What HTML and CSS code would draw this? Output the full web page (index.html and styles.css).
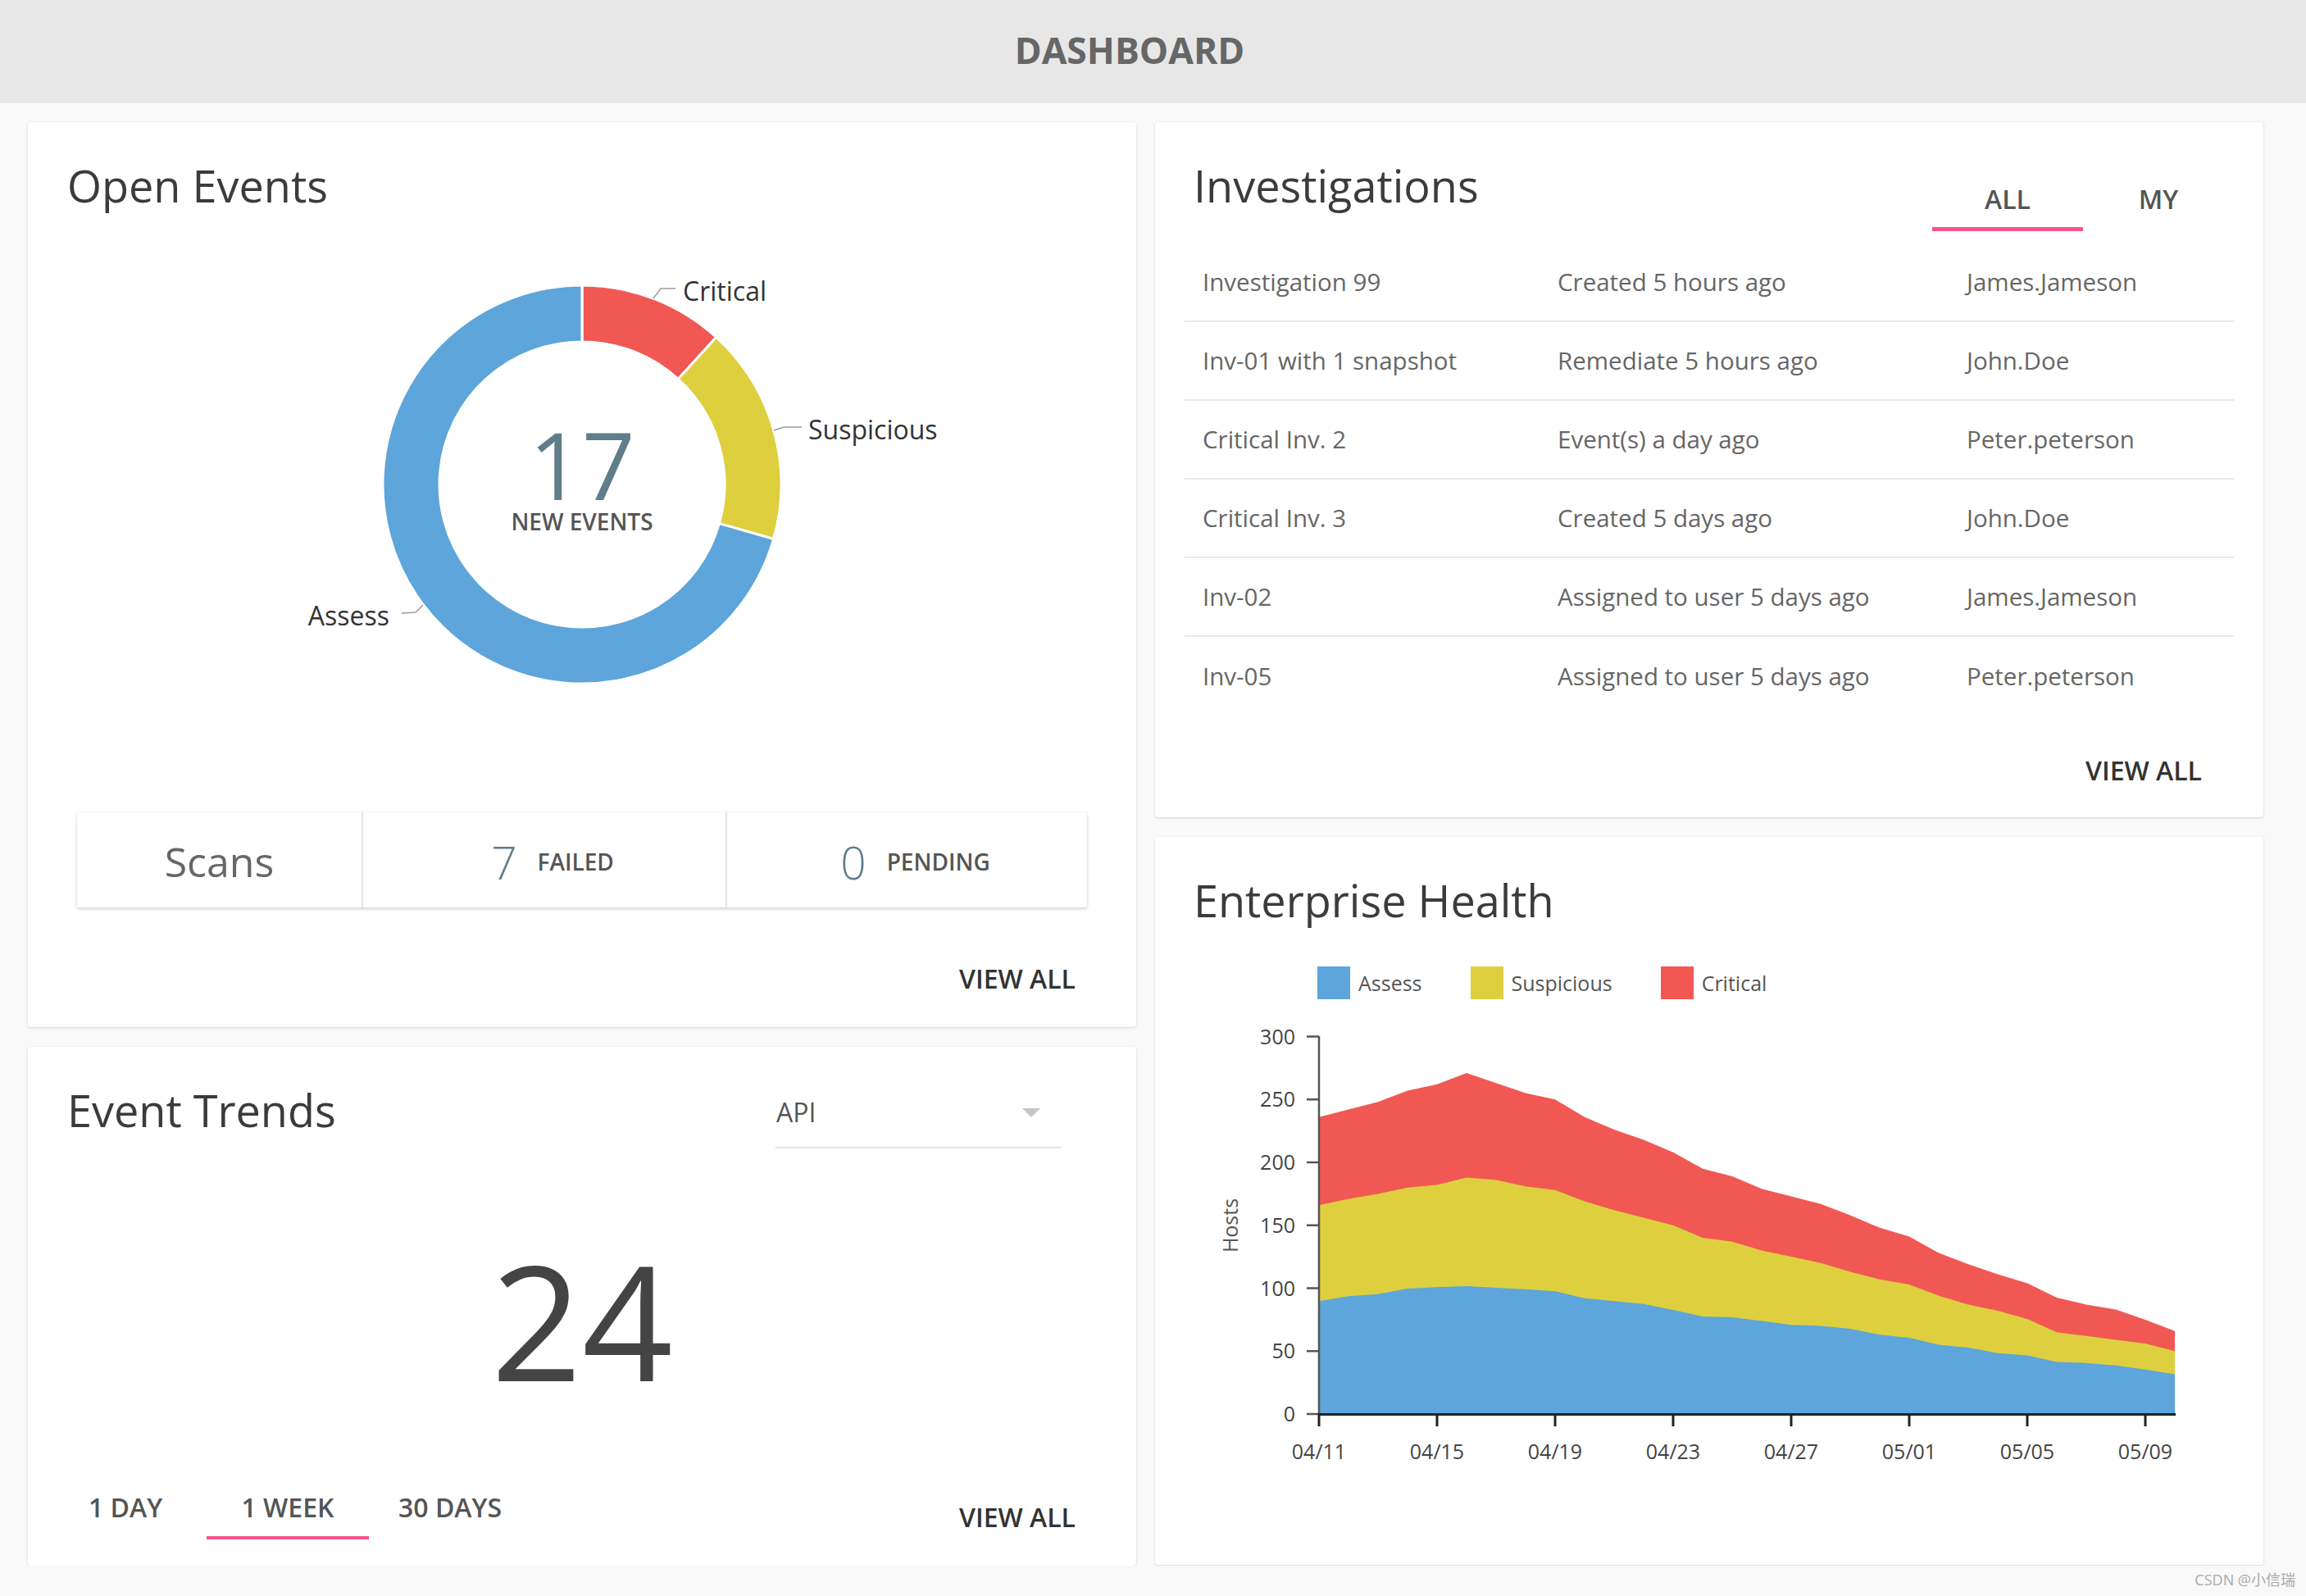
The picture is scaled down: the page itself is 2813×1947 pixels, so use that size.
FILE: index.html
```html
<!DOCTYPE html>
<html lang="en">
<head>
<meta charset="utf-8">
<title>Dashboard</title>
<link rel="stylesheet" href="styles.css">
</head>
<body>
<header class="topbar"><h1>DASHBOARD</h1></header>
<main class="board">
  <div class="col">
    <section class="card open-events">
      <h2 class="card-title">Open Events</h2>
      <svg class="donut" viewBox="0 0 1352 728" width="1352" height="728">
        <path class="sl-red" d="M676 85 A243 243 0 0 1 839.7 148.4 L793.2 199.4 A174 174 0 0 0 676 154 Z"/>
        <path class="sl-yellow" d="M839.7 148.4 A243 243 0 0 1 909.7 394.5 L843.4 375.6 A174 174 0 0 0 793.2 199.4 Z"/>
        <path class="sl-blue" d="M909.7 394.5 A243 243 0 1 1 676 85 L676 154 A174 174 0 1 0 843.4 375.6 Z"/>
        <polyline class="leader" points="763,101 772,89 790,89"/>
        <polyline class="leader" points="910,262 922,258 944,258"/>
        <polyline class="leader" points="482,475 473,484 456,485"/>
        <text class="slice-label" x="799" y="104">Critical</text>
        <text class="slice-label" x="952" y="273">Suspicious</text>
        <text class="slice-label" x="441" y="500" text-anchor="end">Assess</text>
        <text class="donut-num" x="676" y="347" text-anchor="middle">17</text>
        <text class="donut-sub" x="676" y="384" text-anchor="middle">NEW EVENTS</text>
      </svg>
      <div class="scans">
        <div class="scan-cell"><span class="scan-title">Scans</span></div>
        <div class="scan-cell"><span class="scan-num">7</span><span class="scan-label">FAILED</span></div>
        <div class="scan-cell"><span class="scan-num">0</span><span class="scan-label">PENDING</span></div>
      </div>
      <div class="card-foot"><a class="view-all">VIEW ALL</a></div>
    </section>

    <section class="card trends">
      <div class="trends-head">
        <h2 class="card-title">Event Trends</h2>
        <div class="select">
          <span class="select-value">API</span>
          <svg class="select-caret" viewBox="0 0 22 11" width="22" height="11"><polygon points="0,0 22,0 11,11"/></svg>
        </div>
      </div>
      <div class="big-num">24</div>
      <div class="trends-foot">
        <div class="range-tabs">
          <span class="range-tab">1 DAY</span>
          <span class="range-tab active">1 WEEK</span>
          <span class="range-tab">30 DAYS</span>
        </div>
        <a class="view-all">VIEW ALL</a>
      </div>
    </section>
  </div>

  <div class="col">
    <section class="card investigations">
      <div class="inv-head">
        <h2 class="card-title">Investigations</h2>
        <div class="tabs">
          <span class="tab active">ALL</span>
          <span class="tab">MY</span>
        </div>
      </div>
      <div class="inv-table">
        <div class="inv-row"><span>Investigation 99</span><span>Created 5 hours ago</span><span>James.Jameson</span></div>
        <div class="inv-row"><span>Inv-01 with 1 snapshot</span><span>Remediate 5 hours ago</span><span>John.Doe</span></div>
        <div class="inv-row"><span>Critical Inv. 2</span><span>Event(s) a day ago</span><span>Peter.peterson</span></div>
        <div class="inv-row"><span>Critical Inv. 3</span><span>Created 5 days ago</span><span>John.Doe</span></div>
        <div class="inv-row"><span>Inv-02</span><span>Assigned to user 5 days ago</span><span>James.Jameson</span></div>
        <div class="inv-row"><span>Inv-05</span><span>Assigned to user 5 days ago</span><span>Peter.peterson</span></div>
      </div>
      <div class="card-foot"><a class="view-all">VIEW ALL</a></div>
    </section>

    <section class="card health">
      <h2 class="card-title">Enterprise Health</h2>
      <div class="legend">
        <span class="legend-item"><i class="swatch sw-blue"></i>Assess</span>
        <span class="legend-item"><i class="swatch sw-yellow"></i>Suspicious</span>
        <span class="legend-item"><i class="swatch sw-red"></i>Critical</span>
      </div>
      <svg class="area-chart" viewBox="0 0 1352 560" width="1352" height="560">
        <polygon class="ar-red" points="200,485 200,122.7 236,113.5 272,104.3 308,90.5 344,82.8 380,69 416,81.3 452,93.6 488,101.2 524,122.7 560,138.1 596,150.4 632,165.7 668,185.7 704,194.9 740,210.2 776,219.4 812,228.7 848,242.5 884,257.8 920,268.6 956,288.5 992,302.3 1028,314.6 1064,325.4 1100,343 1136,351.5 1172,357.6 1208,369.9 1244,383.7 1244,485"/>
        <polygon class="ar-yellow" points="200,485 200,230.2 236,222.5 272,216.4 308,208.7 344,205.6 380,196.4 416,199.5 452,207.2 488,211.8 524,225.6 560,236.3 596,245.5 632,254.7 668,270.1 704,274.7 740,285.4 776,293.1 812,300.8 848,311.5 884,320.8 920,326.9 956,340.7 992,351.5 1028,359.1 1064,369 1100,385.2 1136,389.8 1172,394.4 1208,399 1244,408.2 1244,485"/>
        <polygon class="ar-blue" points="200,485 200,347.2 236,341.2 272,338.7 308,332.1 344,330.3 380,329 416,330.9 452,332.7 488,335.2 524,343.8 560,347.2 596,350.8 632,358.1 668,365.9 704,367.1 740,371.4 776,376.2 812,377.5 848,381.1 884,388.3 920,392 956,400.6 992,404 1028,410.7 1064,413.6 1100,421.6 1136,422.7 1172,425.7 1208,430.7 1244,436.6 1244,485"/>
        <g class="y-axis">
          <line x1="200" y1="24" x2="200" y2="486"/>
          <line x1="185" y1="24.5" x2="200" y2="24.5"/>
          <line x1="185" y1="101.25" x2="200" y2="101.25"/>
          <line x1="185" y1="178" x2="200" y2="178"/>
          <line x1="185" y1="254.75" x2="200" y2="254.75"/>
          <line x1="185" y1="331.5" x2="200" y2="331.5"/>
          <line x1="185" y1="408.25" x2="200" y2="408.25"/>
          <line x1="185" y1="485" x2="200" y2="485"/>
        </g>
        <g class="x-axis">
          <line x1="199" y1="485.5" x2="1245" y2="485.5"/>
          <line x1="200" y1="485" x2="200" y2="500"/>
          <line x1="344" y1="485" x2="344" y2="500"/>
          <line x1="488" y1="485" x2="488" y2="500"/>
          <line x1="632" y1="485" x2="632" y2="500"/>
          <line x1="776" y1="485" x2="776" y2="500"/>
          <line x1="920" y1="485" x2="920" y2="500"/>
          <line x1="1064" y1="485" x2="1064" y2="500"/>
          <line x1="1208" y1="485" x2="1208" y2="500"/>
        </g>
        <g class="tick-labels" text-anchor="end">
          <text x="171" y="33.5">300</text>
          <text x="171" y="110.25">250</text>
          <text x="171" y="187">200</text>
          <text x="171" y="263.75">150</text>
          <text x="171" y="340.5">100</text>
          <text x="171" y="417.25">50</text>
          <text x="171" y="494">0</text>
        </g>
        <g class="tick-labels" text-anchor="middle">
          <text x="200" y="540">04/11</text>
          <text x="344" y="540">04/15</text>
          <text x="488" y="540">04/19</text>
          <text x="632" y="540">04/23</text>
          <text x="776" y="540">04/27</text>
          <text x="920" y="540">05/01</text>
          <text x="1064" y="540">05/05</text>
          <text x="1208" y="540">05/09</text>
        </g>
        <text class="axis-title" x="101" y="255" text-anchor="middle" transform="rotate(-90 101 255)">Hosts</text>
      </svg>
    </section>
  </div>
</main>
<div class="watermark">CSDN @小信瑞</div>
</body>
</html>
```

FILE: styles.css
```css
html, body {
  margin: 0;
  padding: 0;
}

body {
  background: #f9f9f9;
  font-family: "Open Sans", "Liberation Sans", sans-serif;
  color: #333;
}

.topbar {
  height: 126px;
  box-sizing: border-box;
  background: #e7e7e7;
  display: flex;
  align-items: center;
  justify-content: center;
  padding-right: 57px;
  padding-bottom: 3px;
}

.topbar h1 {
  margin: 0;
  font-size: 44.5px;
  line-height: 1;
  font-weight: 700;
  color: #666;
}

.board {
  display: flex;
  gap: 23px;
  padding: 23px 52px 0 34px;
}

.col {
  width: 1352px;
  display: flex;
  flex-direction: column;
  gap: 24px;
}

.card {
  background: #fff;
  border-radius: 3px;
  box-shadow: 0 1px 3px rgba(0, 0, 0, 0.14), 0 0 1px rgba(0, 0, 0, 0.1);
}

.card-title {
  margin: 0;
  font-size: 54px;
  line-height: 74px;
  font-weight: 400;
  color: #3b3b3b;
}

.card-foot {
  display: flex;
  justify-content: flex-end;
}

.view-all {
  font-size: 32px;
  line-height: 44px;
  font-weight: 600;
  color: #333;
  text-decoration: none;
}

/* Open events */
.open-events {
  padding: 40px 0 37px;
}

.open-events .card-title {
  padding-left: 48px;
}

.donut {
  display: block;
  width: 1352px;
  height: 728px;
}

.sl-red { fill: #f15854; stroke: #fff; stroke-width: 3; }
.sl-yellow { fill: #decf3f; stroke: #fff; stroke-width: 3; }
.sl-blue { fill: #5da5da; stroke: #fff; stroke-width: 3; }

.leader {
  fill: none;
  stroke: #9a9a9a;
  stroke-width: 1.5;
}

.slice-label {
  font-family: "Open Sans", sans-serif;
  font-size: 32px;
  fill: #333;
}

.donut-num {
  font-family: "Open Sans", sans-serif;
  font-size: 113px;
  font-weight: 400;
  fill: #607d8b;
}

.donut-sub {
  font-family: "Open Sans", sans-serif;
  font-size: 28px;
  font-weight: 600;
  fill: #555;
}

.scans {
  margin: 0 60px;
  height: 116px;
  display: grid;
  grid-template-columns: 347px 444px 1fr;
  border-radius: 2px;
  box-shadow: 0 2px 4px rgba(0, 0, 0, 0.18), 0 0 1px rgba(0, 0, 0, 0.14);
}

.scan-cell {
  display: flex;
  align-items: center;
  justify-content: center;
  gap: 25px;
  padding-left: 20px;
  padding-top: 4px;
  border-left: 2px solid #e6e6e6;
}

.scan-cell:first-child {
  border-left: 0;
  padding-left: 0;
}

.scan-title {
  font-size: 50px;
  font-weight: 400;
  color: #666;
}

.scan-num {
  font-size: 55px;
  font-weight: 300;
  color: #607d8b;
}

.scan-label {
  font-size: 28px;
  font-weight: 600;
  color: #555;
}

.open-events .card-foot {
  margin-top: 65px;
  padding-right: 74px;
}

/* Event trends */
.trends {
  padding: 40px 0 32px;
}

.trends-head {
  display: flex;
  justify-content: space-between;
  align-items: flex-start;
}

.trends-head .card-title {
  padding-left: 48px;
}

.select {
  width: 349px;
  margin: 18px 91px 0 0;
  padding-bottom: 20px;
  border-bottom: 2px solid #e4e4e4;
  display: flex;
  justify-content: space-between;
  align-items: center;
}

.select-value {
  font-size: 32px;
  line-height: 44px;
  color: #555;
  padding-left: 1px;
}

.select-caret {
  width: 22px;
  height: 11px;
  margin-right: 26px;
  fill: #c6c6c6;
}

.big-num {
  margin-top: 111px;
  font-size: 194px;
  line-height: 196px;
  font-weight: 400;
  text-align: center;
  color: #444;
}

.trends-foot {
  margin-top: 109px;
  display: flex;
  justify-content: space-between;
  align-items: flex-end;
  padding: 0 74px 0 20px;
}

.range-tabs {
  display: flex;
}

.range-tab {
  width: 198px;
  text-align: center;
  font-size: 32px;
  line-height: 44px;
  font-weight: 600;
  color: #555;
  padding-bottom: 13px;
  border-bottom: 4px solid transparent;
}

.range-tab.active {
  border-bottom-color: #f7548c;
}

.trends-foot .view-all {
  margin-bottom: 5px;
}

/* Investigations */
.investigations {
  padding: 40px 36px 35px;
}

.inv-head {
  display: flex;
  justify-content: space-between;
  align-items: flex-start;
}

.inv-head .card-title {
  padding-left: 11px;
}

.tabs {
  display: flex;
  margin-top: 29px;
}

.tab {
  width: 184px;
  text-align: center;
  font-size: 32px;
  line-height: 44px;
  font-weight: 600;
  color: #555;
  padding: 3px 0 12px;
  border-bottom: 5px solid transparent;
}

.tab.active {
  border-bottom-color: #f7548c;
}

.inv-table {
  margin-top: 15px;
}

.inv-row {
  display: grid;
  grid-template-columns: 433px 498px 1fr;
  align-items: center;
  height: 96px;
  box-sizing: border-box;
  border-bottom: 2px solid #e8e8e8;
}

.inv-row:last-child {
  border-bottom: 0;
}

.inv-row span {
  padding-left: 22px;
  font-size: 29.5px;
  line-height: 40px;
  color: #666;
}

.inv-row span:last-child {
  padding-left: 23px;
}

.investigations .card-foot {
  margin-top: 45px;
  padding-right: 39px;
}

/* Enterprise health */
.health {
  padding: 40px 0 109px;
}

.health .card-title {
  padding-left: 47px;
}

.legend {
  display: flex;
  gap: 59px;
  margin-top: 44px;
  padding-left: 198px;
}

.legend-item {
  display: flex;
  align-items: center;
  gap: 10px;
  font-size: 25px;
  line-height: 40px;
  color: #555;
}

.swatch {
  display: block;
  width: 40px;
  height: 40px;
}

.sw-blue { background: #5da5da; }
.sw-yellow { background: #decf3f; }
.sw-red { background: #f15854; }

.area-chart {
  display: block;
  margin-top: 21px;
  width: 1352px;
  height: 560px;
}

.ar-red { fill: #f15854; }
.ar-yellow { fill: #decf3f; }
.ar-blue { fill: #5da5da; }

.y-axis line {
  stroke: #555;
  stroke-width: 2.5;
}

.x-axis line {
  stroke: #222;
  stroke-width: 3;
}

.tick-labels text {
  font-family: "Open Sans", sans-serif;
  font-size: 25px;
  fill: #444;
}

.axis-title {
  font-family: "Open Sans", sans-serif;
  font-size: 25px;
  fill: #555;
}

.watermark {
  position: absolute;
  right: 13px;
  bottom: 8px;
  font-family: "Open Sans", "Noto Sans CJK SC", sans-serif;
  font-size: 18px;
  color: #aaa;
}
```
